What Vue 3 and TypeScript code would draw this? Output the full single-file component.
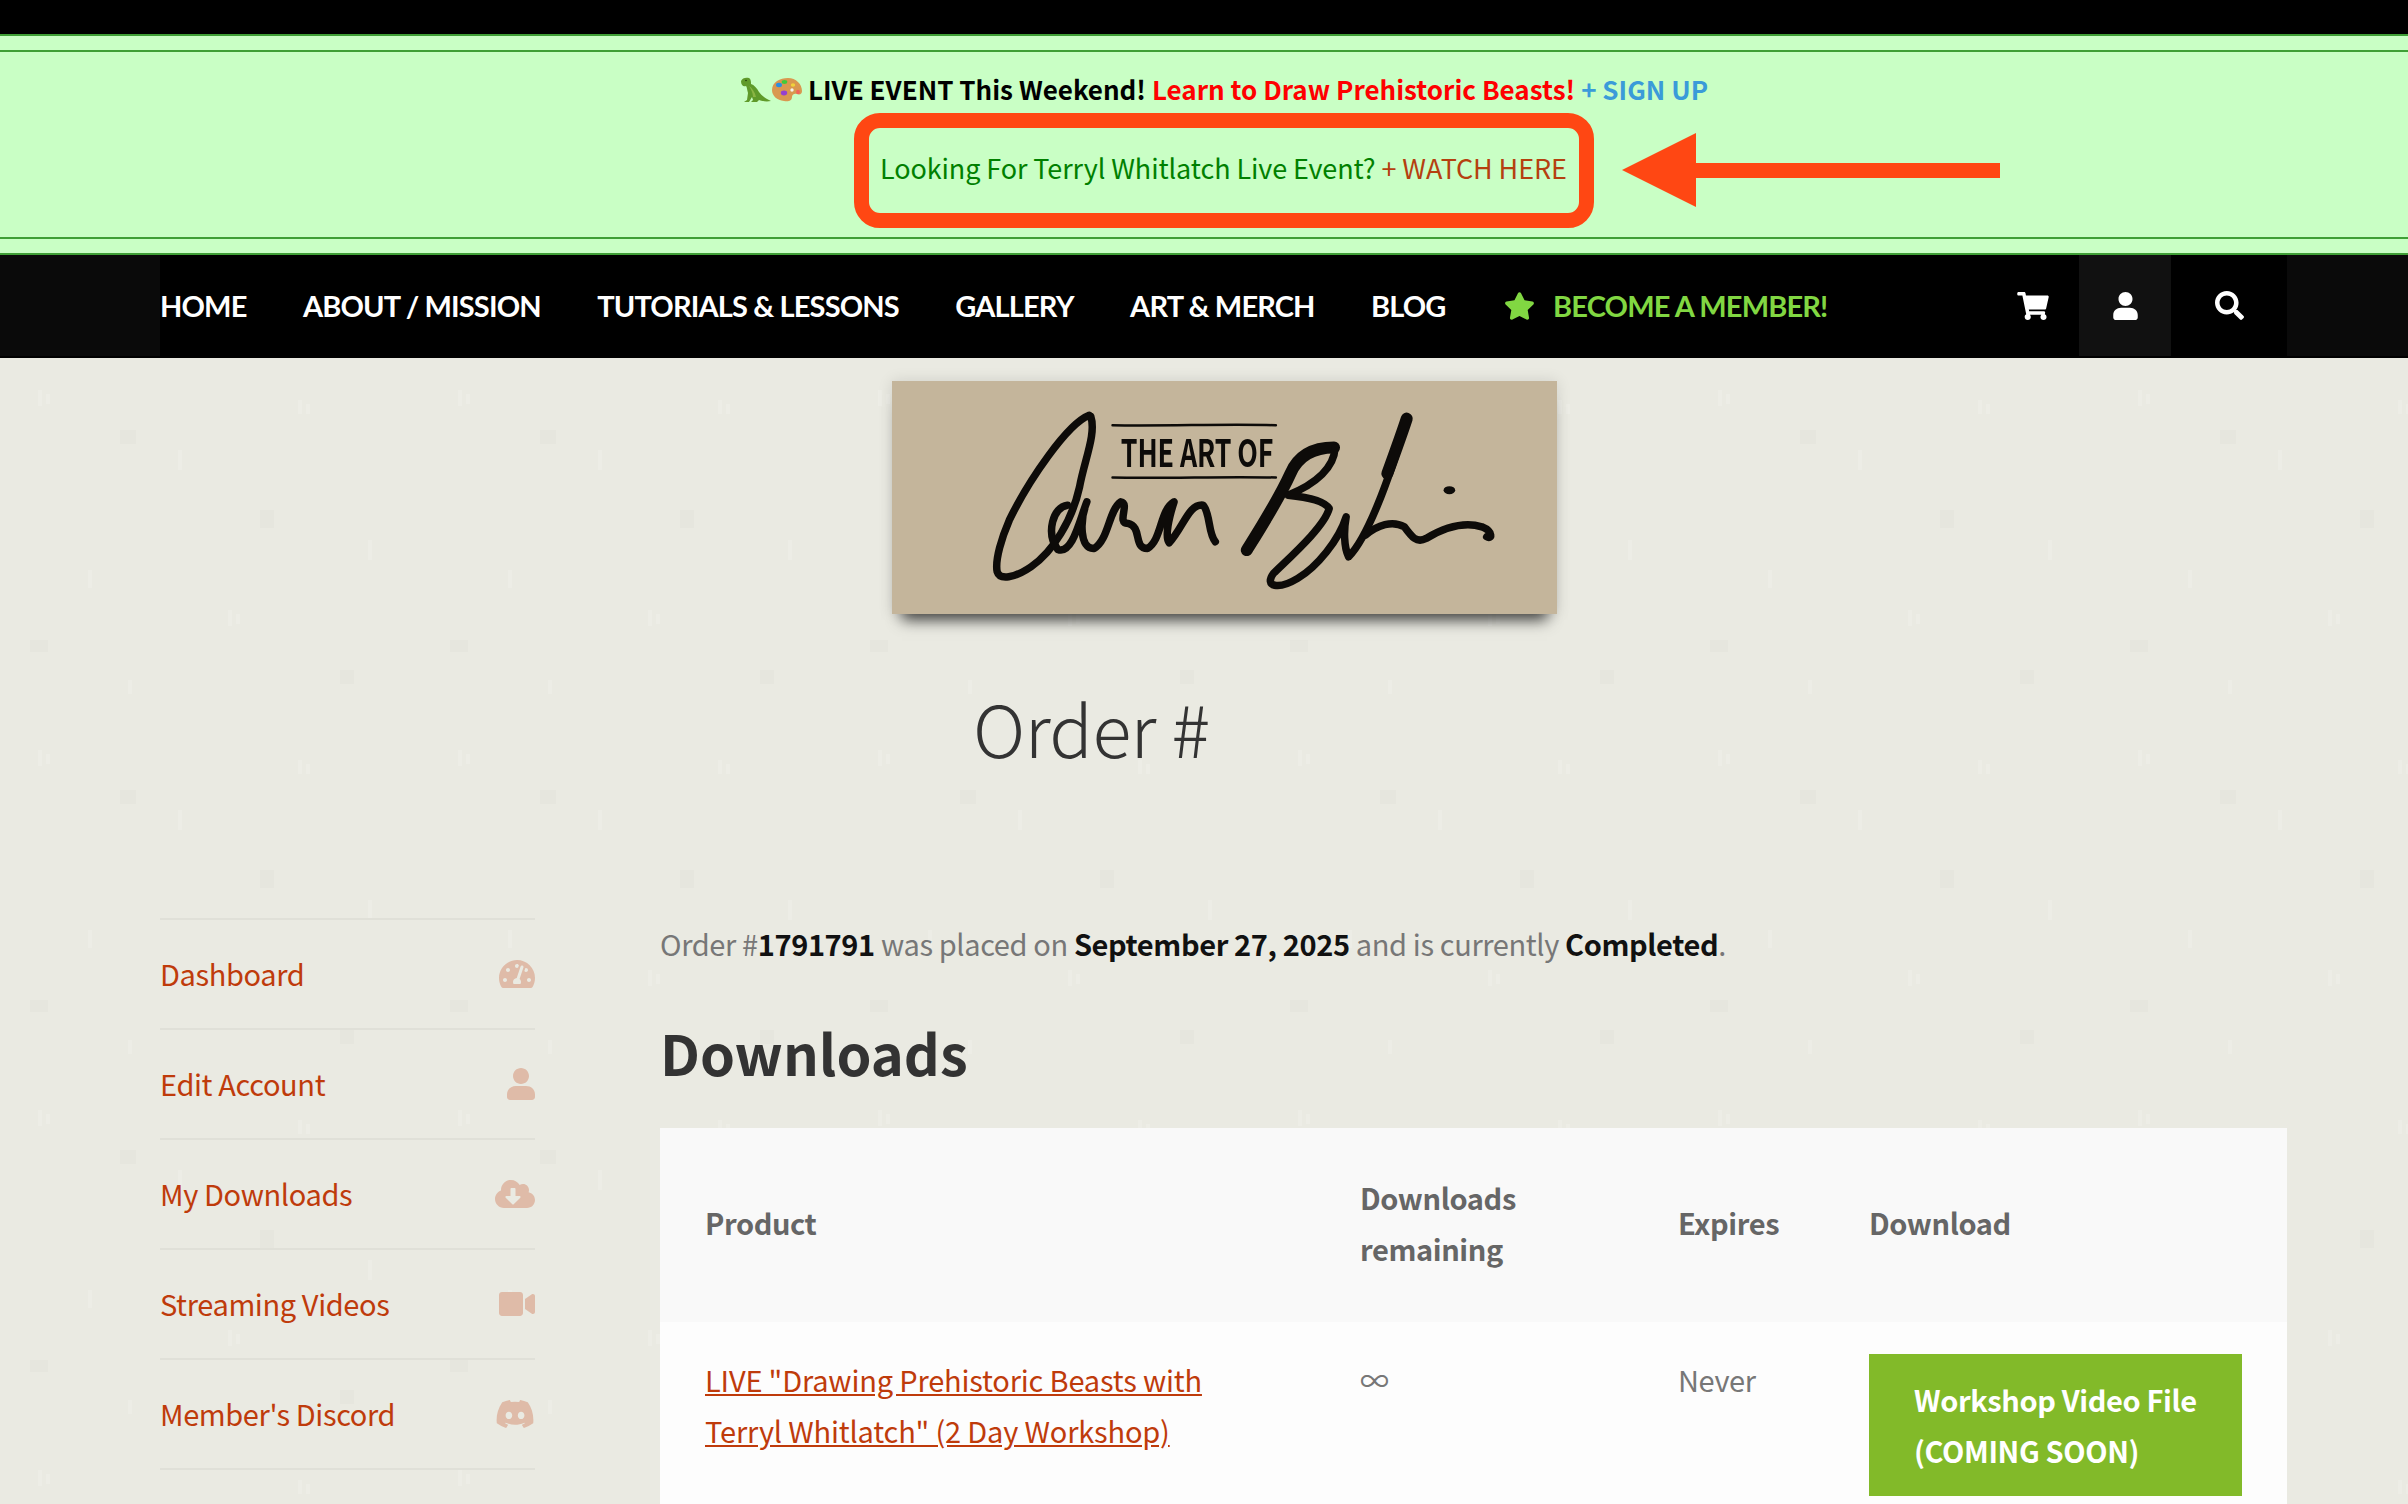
<script setup lang="ts">
const navItems = ['HOME', 'ABOUT / MISSION', 'TUTORIALS & LESSONS', 'GALLERY', 'ART & MERCH', 'BLOG']

const sideLinks = [
  {
    label: 'Dashboard',
    box: '0 0 576 512',
    w: 36,
    d: 'M288 32C128.94 32 0 160.94 0 320c0 52.8 14.25 102.26 39.06 144.8 5.61 9.62 16.3 15.2 27.44 15.2h443c11.14 0 21.83-5.58 27.44-15.2C561.75 422.26 576 372.8 576 320c0-159.06-128.94-288-288-288zm0 64c14.71 0 26.58 10.13 30.32 23.65-1.11 2.26-2.64 4.23-3.45 6.67l-9.22 27.67c-5.13 3.49-10.97 6.01-17.64 6.01-17.67 0-32-14.33-32-32S270.33 96 288 96zM96 384c-17.67 0-32-14.33-32-32s14.33-32 32-32 32 14.33 32 32-14.33 32-32 32zm48-160c-17.67 0-32-14.33-32-32s14.33-32 32-32 32 14.33 32 32-14.33 32-32 32zm246.77-72.41l-61.33 184C343.13 347.33 352 364.54 352 384c0 11.72-3.38 22.55-8.88 32H232.88c-5.5-9.45-8.88-20.28-8.88-32 0-33.94 26.5-61.43 59.9-63.59l61.34-184.01c4.17-12.56 17.73-19.45 30.36-15.17 12.57 4.19 19.35 17.79 15.17 30.36zm14.66 57.2l15.52-46.55c3.47-1.29 7.13-2.23 11.05-2.23 17.67 0 32 14.33 32 32s-14.33 32-32 32c-11.38-.01-20.89-6.28-26.57-15.22zM480 384c-17.67 0-32-14.33-32-32s14.33-32 32-32 32 14.33 32 32-14.33 32-32 32z'
  },
  {
    label: 'Edit Account',
    box: '0 0 448 512',
    w: 28,
    d: 'M224 256c70.7 0 128-57.3 128-128S294.7 0 224 0 96 57.3 96 128s57.3 128 128 128zM144 288C64 288 0 340 0 422v42c0 26.5 21.5 48 48 48h352c26.5 0 48-21.5 48-48v-42c0-82-64-134-144-134z'
  },
  {
    label: 'My Downloads',
    box: '0 0 640 512',
    w: 40,
    d: 'M537.6 226.6c4.1-10.7 6.4-22.4 6.4-34.6 0-53-43-96-96-96-19.7 0-38.1 6-53.3 16.2C367 64.2 315.3 32 256 32c-88.4 0-160 71.6-160 160 0 2.7.1 5.4.2 8.1C40.2 219.8 0 273.2 0 336c0 79.5 64.5 144 144 144h368c70.7 0 128-57.3 128-128 0-61.9-44-113.6-102.4-125.4zm-132.9 88.7L299.3 420.7c-6.2 6.2-16.4 6.2-22.6 0L171.3 315.3c-10.1-10.1-2.9-27.3 11.3-27.3H248V176c0-8.8 7.2-16 16-16h48c8.8 0 16 7.2 16 16v112h65.4c14.2 0 21.4 17.2 11.3 27.3z'
  },
  {
    label: 'Streaming Videos',
    box: '0 0 576 512',
    w: 36,
    d: 'M336.2 64H47.8C21.4 64 0 85.4 0 111.8v288.4C0 426.6 21.4 448 47.8 448h288.4c26.4 0 47.8-21.4 47.8-47.8V111.8c0-26.4-21.4-47.8-47.8-47.8zm189.4 37.7L416 177.3v157.4l109.6 75.5c21.2 14.6 50.4-.3 50.4-25.8V127.5c0-25.4-29.1-40.4-50.4-25.8z'
  },
  {
    label: "Member's Discord",
    box: '0 0 640 512',
    w: 40,
    d: 'M524.531,69.836a1.5,1.5,0,0,0-.764-.7A485.065,485.065,0,0,0,404.081,32.03a1.816,1.816,0,0,0-1.923.91,337.461,337.461,0,0,0-14.9,30.6,447.848,447.848,0,0,0-134.426,0,309.541,309.541,0,0,0-15.135-30.6,1.89,1.89,0,0,0-1.924-.91A483.689,483.689,0,0,0,116.085,69.137a1.712,1.712,0,0,0-.788.676C39.068,183.651,18.186,294.69,28.43,404.354a2.016,2.016,0,0,0,.765,1.375A487.666,487.666,0,0,0,176.02,479.918a1.9,1.9,0,0,0,2.063-.676A348.2,348.2,0,0,0,208.12,430.4a1.86,1.86,0,0,0-1.019-2.588,321.173,321.173,0,0,1-45.868-21.853,1.885,1.885,0,0,1-.185-3.126c3.082-2.309,6.166-4.711,9.109-7.137a1.819,1.819,0,0,1,1.9-.256c96.229,43.917,200.41,43.917,295.5,0a1.812,1.812,0,0,1,1.924.233c2.944,2.426,6.027,4.851,9.132,7.16a1.884,1.884,0,0,1-.162,3.126,301.407,301.407,0,0,1-45.89,21.83,1.875,1.875,0,0,0-1,2.611,391.055,391.055,0,0,0,30.014,48.815,1.864,1.864,0,0,0,2.063.7A486.048,486.048,0,0,0,610.7,405.729a1.882,1.882,0,0,0,.765-1.352C623.729,277.594,590.933,167.465,524.531,69.836ZM222.491,337.58c-28.972,0-52.844-26.587-52.844-59.239S193.056,219.1,222.491,219.1c29.665,0,53.306,26.82,52.843,59.239C275.334,310.993,251.924,337.58,222.491,337.58Zm195.38,0c-28.971,0-52.843-26.587-52.843-59.239S388.437,219.1,417.871,219.1c29.667,0,53.307,26.82,52.844,59.239C470.715,310.993,447.538,337.58,417.871,337.58Z'
  }
]
</script>

<template>
  <div class="page">
    <div class="topbar"></div>

    <div class="banner">
      <div class="banner-inner">
        <p class="event-line">
          <span class="emojis">
            <svg viewBox="0 0 31 25" width="31" height="25">
              <path d="M1 4C2 1 6 0 9 1c2 1 2 4 2 6 3 1 6 4 8 8 3 4 7 7 12 9-5 1-9 0-12-1l-2 2h-6l2-2-1-3-3 5H4l3-2 1-7C7 13 7 10 6 9 3 10 1 8 1 4z" fill="#5f9a2a" />
              <path d="M9 9c3 2 6 6 7 11l-3 0c0-4-2-8-4-11z" fill="#8ab544" />
              <circle cx="6" cy="3.5" r="0.8" fill="#1f3a08" />
            </svg>
            <svg viewBox="0 0 31 25" width="31" height="25">
              <path d="M1 13C1 5 9 1 17 1c8 0 14 6 14 13 0 3-2 4-5 3-3-1-5 1-5 3 0 4-4 5-8 4C6 23 1 19 1 13z" fill="#d9984f" />
              <ellipse cx="8" cy="8" rx="3" ry="2.2" fill="#2b8fe0" />
              <ellipse cx="13.5" cy="5" rx="2.8" ry="1.9" fill="#3ecb3a" />
              <ellipse cx="22" cy="8" rx="2.2" ry="1.7" fill="#f0d23c" />
              <ellipse cx="13" cy="16" rx="3.2" ry="2.4" fill="#9540d0" />
              <ellipse cx="27" cy="15" rx="1.9" ry="2.2" fill="#f0655a" />
              <circle cx="21" cy="13" r="1.7" fill="#f4f4ee" />
            </svg>
          </span>
          <strong class="ev-black">LIVE EVENT This Weekend!</strong>
          <strong class="ev-red">Learn to Draw Prehistoric Beasts!</strong>
          <span class="ev-blue">+ SIGN UP</span>
        </p>
        <div class="callout">
          <span class="ev-green">Looking For Terryl Whitlatch Live Event?</span>
          <span class="ev-watch">+ WATCH HERE</span>
          <svg class="arrow" width="378" height="74" viewBox="0 0 378 74">
            <path d="M0 37L74 0V30H378V45H74V74z" fill="#ff4713" />
          </svg>
        </div>
      </div>
    </div>

    <nav class="nav">
      <div class="nav-inner">
        <a v-for="item in navItems" :key="item" class="nav-link">{{ item }}</a>
        <a class="nav-link member">
          <svg class="star" viewBox="0 0 576 512" width="31" height="28">
            <path fill="#81d742" d="M259.3 17.8L194 150.2 47.9 171.5c-26.2 3.8-36.7 36.1-17.7 54.6l105.7 103-25 145.5c-4.5 26.3 23.2 46 46.4 33.7L288 439.6l130.7 68.7c23.2 12.2 50.9-7.4 46.4-33.7l-25-145.5 105.7-103c19-18.5 8.5-50.8-17.7-54.6L382 150.2 316.7 17.8c-11.7-23.6-45.6-23.9-57.4 0z" />
          </svg>
          BECOME A MEMBER!
        </a>
        <div class="nav-icons">
          <div class="nav-cell">
            <svg viewBox="0 0 576 512" width="32" height="28">
              <path fill="#fff" d="M528.12 301.319l47.273-208C578.806 78.301 567.391 64 551.99 64H159.208l-9.166-44.81C147.758 8.021 137.93 0 126.529 0H24C10.745 0 0 10.745 0 24v16c0 13.255 10.745 24 24 24h69.883l70.248 343.435C147.325 417.1 136 435.222 136 456c0 30.928 25.072 56 56 56s56-25.072 56-56c0-15.674-6.447-29.835-16.824-40h209.647C430.447 426.165 424 440.326 424 456c0 30.928 25.072 56 56 56s56-25.072 56-56c0-22.172-12.888-41.332-31.579-50.405l5.517-24.276c3.413-15.018-8.002-29.319-23.403-29.319H218.117l-6.545-32h293.145c11.206 0 20.92-7.754 23.403-18.681z" />
            </svg>
          </div>
          <div class="nav-cell active">
            <svg viewBox="0 0 448 512" width="25" height="28">
              <path fill="#fff" d="M224 256c70.7 0 128-57.3 128-128S294.7 0 224 0 96 57.3 96 128s57.3 128 128 128zM144 288C64 288 0 340 0 422v42c0 26.5 21.5 48 48 48h352c26.5 0 48-21.5 48-48v-42c0-82-64-134-144-134z" />
            </svg>
          </div>
          <div class="nav-cell wide">
            <svg viewBox="0 0 512 512" width="29" height="29">
              <path fill="#fff" d="M505 442.7L405.3 343c-4.5-4.5-10.6-7-17-7H372c27.6-35.3 44-79.7 44-128C416 93.1 322.9 0 208 0S0 93.1 0 208s93.1 208 208 208c48.3 0 92.7-16.4 128-44v16.3c0 6.4 2.5 12.5 7 17l99.7 99.7c9.4 9.4 24.6 9.4 33.9 0l28.3-28.3c9.4-9.4 9.4-24.6.1-34zM208 336c-70.7 0-128-57.2-128-128 0-70.7 57.2-128 128-128 70.7 0 128 57.2 128 128 0 70.7-57.2 128-128 128z" />
            </svg>
          </div>
        </div>
      </div>
    </nav>

    <div class="wrap">
      <div class="logo-row">
        <div class="logo">
          <svg viewBox="108 62 1372 700" preserveAspectRatio="none" width="665" height="233">
            <g fill="none" stroke="#0d0b09" stroke-linecap="round" stroke-linejoin="round">
              <path class="sig" d="M515 165C470 190 390 360 350 480C335 530 320 600 325 635C330 660 360 655 395 620C440 575 480 480 495 380C505 300 530 220 518 168" />
              <path class="sig" d="M470 435C440 440 425 520 450 568C480 585 495 480 510 425C495 480 495 568 525 565C555 540 555 450 580 425C600 430 570 490 595 490C625 500 605 565 635 565C665 540 660 450 690 425C680 470 670 530 680 548C710 500 720 430 750 435C765 460 760 520 775 545" />
              <path class="sig-heavy" d="M1020 262C975 262 945 290 930 340C905 420 870 500 840 570" />
              <path class="sig" d="M1022 265C1020 320 985 370 925 405C960 410 1000 420 1010 445C1000 500 930 590 895 640C875 680 905 690 945 655C985 620 1030 540 1045 470C1040 510 1040 560 1050 590C1085 540 1130 380 1170 175" />
              <path class="sig-heavy" d="M1130 340C1145 280 1160 220 1170 175" />
              <path class="sig" d="M1085 525C1110 495 1140 480 1165 500C1180 530 1190 550 1210 535C1250 500 1290 485 1325 500C1350 515 1345 540 1335 530" />
              <path class="rule" d="M563 195C680 198 800 190 900 195" />
              <path class="rule" d="M563 352C680 355 800 348 900 352" />
            </g>
            <circle cx="1258" cy="390" r="12" fill="#0d0b09" />
            <text x="580" y="319" font-size="112" textLength="315" lengthAdjust="spacingAndGlyphs" class="logo-text">THE ART OF</text>
          </svg>
        </div>
      </div>

      <h1 class="title">Order #</h1>

      <div class="columns">
        <aside class="sidebar">
          <a v-for="link in sideLinks" :key="link.label" class="side-link">
            <span class="side-label">{{ link.label }}</span>
            <svg :viewBox="link.box" :width="link.w" height="32" fill="#dfbba8"><path :d="link.d" /></svg>
          </a>
        </aside>

        <main class="main">
          <p class="summary">
            Order #<b>1791791</b> was placed on <b>September 27, 2025</b> and is currently <b>Completed</b>.
          </p>
          <h2 class="heading">Downloads</h2>
          <table class="dl-table">
            <colgroup>
              <col class="col-product" />
              <col class="col-remaining" />
              <col class="col-expires" />
              <col />
            </colgroup>
            <thead>
              <tr>
                <th>Product</th>
                <th>Downloads remaining</th>
                <th>Expires</th>
                <th>Download</th>
              </tr>
            </thead>
            <tbody>
              <tr>
                <td><a class="product-link">LIVE "Drawing Prehistoric Beasts with Terryl Whitlatch" (2 Day Workshop)</a></td>
                <td>∞</td>
                <td>Never</td>
                <td><a class="dl-button">Workshop Video File<br />(COMING SOON)</a></td>
              </tr>
            </tbody>
          </table>
        </main>
      </div>
    </div>
  </div>
</template>

<style scoped>
.page {
  height: 1504px;
  overflow: hidden;
  background-color: #eaeae2;
  background-image: url("data:image/svg+xml,%3Csvg xmlns='http://www.w3.org/2000/svg' width='420' height='360'%3E%3Cg fill='none' stroke='%23ededE6' stroke-width='4'%3E%3Cpath d='M40 30v16M48 34v10M180 90v20M300 40v14M308 44v10M90 210v18M230 250v16M238 254v10M370 180v20M130 320v14'/%3E%3C/g%3E%3Cg fill='%23e6e6de'%3E%3Crect x='120' y='70' width='16' height='14'/%3E%3Crect x='260' y='150' width='14' height='18'/%3E%3Crect x='30' y='280' width='18' height='12'/%3E%3Crect x='340' y='310' width='14' height='14'/%3E%3C/g%3E%3C/svg%3E");
  font-family: "Noto Sans CJK JP", "Noto Sans", sans-serif;
  font-size: 29px;
  letter-spacing: -0.38px;
  color: #777;
}

.topbar {
  height: 34px;
  background: #000;
}

.banner {
  height: 221px;
  padding: 14px 0;
  box-sizing: border-box;
  background: #c9ffc5;
  border-top: 2px solid #3f9f36;
  border-bottom: 2px solid #3f9f36;
}

.banner-inner {
  height: 100%;
  padding-top: 15px;
  box-sizing: border-box;
  border-top: 2px solid #3f9f36;
  border-bottom: 2px solid #3f9f36;
  display: flex;
  flex-direction: column;
  align-items: center;
}

.event-line {
  margin: 0;
  height: 44px;
  display: flex;
  align-items: center;
  gap: 6px;
  font-size: 26px;
  letter-spacing: 0;
  line-height: 40px;
  white-space: nowrap;
  padding-left: 40px;
}

.emojis {
  display: flex;
}

.ev-black {
  color: #000;
  font-weight: 600;
}

.ev-red {
  color: #f00;
  font-weight: 600;
}

.ev-blue {
  color: #3a9bd9;
  font-weight: 600;
}

.callout {
  position: relative;
  margin-left: 40px;
  margin-top: 2px;
  width: 740px;
  height: 115px;
  box-sizing: border-box;
  border: 15px solid #ff4713;
  border-radius: 26px;
  padding: 0 0 6px 11px;
  display: flex;
  align-items: center;
  gap: 6px;
  font-size: 27px;
  letter-spacing: -0.1px;
  white-space: nowrap;
}

.ev-green {
  color: #008000;
}

.ev-watch {
  color: #b5400f;
}

.arrow {
  position: absolute;
  left: 753px;
  top: 5px;
}

.nav {
  height: 103px;
  background: #0a0a0a;
  border-bottom: 2px solid #000;
  box-sizing: border-box;
  padding: 0 121px 0 160px;
}

.nav-inner {
  height: 100%;
  background: #000;
  display: flex;
  align-items: center;
  font-family: Lato, sans-serif;
  font-weight: 700;
  font-size: 29px;
  letter-spacing: -0.85px;
  color: #fff;
}

.nav-link {
  margin-right: 56.5px;
  white-space: nowrap;
}

.member {
  margin-left: 2px;
  color: #81d742;
  display: flex;
  align-items: center;
  gap: 18px;
}

.nav-icons {
  margin-left: auto;
  height: 100%;
  display: flex;
}

.nav-cell {
  width: 92px;
  display: flex;
  align-items: center;
  justify-content: center;
}

.nav-cell.active {
  background: #111;
}

.nav-cell.wide {
  width: 116px;
}

.wrap {
  width: 2127px;
  margin-left: 160px;
}

.logo-row {
  padding: 23px 0 0 2px;
  display: flex;
  justify-content: center;
}

.logo {
  width: 665px;
  height: 233px;
  background: #c4b59b;
  box-shadow: 0 16px 14px -10px rgba(0, 0, 0, 0.7), 0 0 14px rgba(0, 0, 0, 0.12);
}

.logo svg {
  display: block;
  filter: blur(0.6px);
}

.sig {
  stroke-width: 7.5px;
  vector-effect: non-scaling-stroke;
}

.sig-heavy {
  stroke-width: 12px;
  vector-effect: non-scaling-stroke;
}

.rule {
  stroke-width: 2.5px;
  vector-effect: non-scaling-stroke;
}

.logo-text {
  font-family: "Noto Sans CJK JP", sans-serif;
  font-weight: 700;
  fill: #0d0b09;
}

.title {
  margin: 63px 0 0 813px;
  font-size: 72px;
  line-height: 100px;
  font-weight: 300;
  letter-spacing: -0.5px;
  color: #333;
}

.columns {
  margin-top: 141px;
  display: grid;
  grid-template-columns: 375px 1fr;
  gap: 125px;
}

.sidebar {
  border-top: 2px solid #e0e0d8;
}

.side-link {
  height: 110px;
  box-sizing: border-box;
  border-bottom: 2px solid #e0e0d8;
  display: flex;
  align-items: center;
  justify-content: space-between;
  color: #bf3b0b;
}

.side-label {
  padding-bottom: 3px;
}

.summary {
  margin: 0;
  line-height: 51px;
}

.summary b {
  color: #111;
  font-weight: 600;
}

.heading {
  margin: 43px 0 0;
  font-size: 56px;
  line-height: 80px;
  letter-spacing: 0;
  font-weight: 600;
  color: #333;
}

.dl-table {
  margin-top: 36px;
  width: 100%;
  table-layout: fixed;
  border-collapse: collapse;
  line-height: 51px;
}

.col-product {
  width: 655px;
}

.col-remaining {
  width: 318px;
}

.col-expires {
  width: 191px;
}

.dl-table th {
  height: 194px;
  padding: 0 45px 5px;
  box-sizing: border-box;
  background: #f9f9f9;
  text-align: left;
  font-weight: 600;
  color: #666;
}

.dl-table td {
  padding: 32px 45px;
  background: #fdfdfd;
  vertical-align: top;
}

.product-link {
  color: #bf3b0b;
  letter-spacing: -0.18px;
  text-decoration: underline;
}

.dl-button {
  display: block;
  padding: 20px 45px;
  background: #82ba29;
  color: #fff;
  font-weight: 600;
}
</style>

<style>
body {
  margin: 0;
}
</style>
